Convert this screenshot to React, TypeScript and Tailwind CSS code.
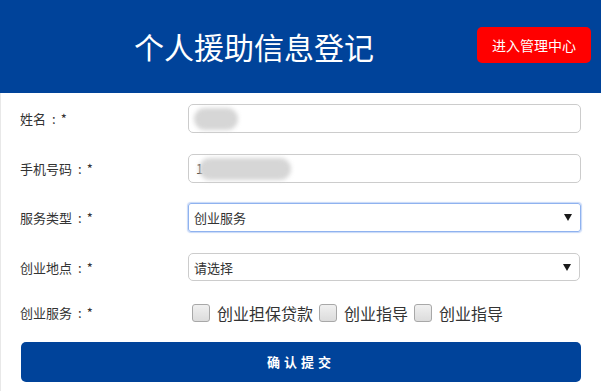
import React from "react";

const font = { fontFamily: '"Noto Sans CJK SC", "Noto Sans", sans-serif' };

function Label({ text }: { text: string }) {
  return (
    <div className="w-[187px] shrink-0 pl-[19px] text-[13px] text-[#333] leading-none flex items-center">
      <span>{text}</span>
      <span className="ml-[6px]">:</span>
      <span className="ml-[5px]">*</span>
    </div>
  );
}

function Arrow() {
  return (
    <svg width="8" height="7" viewBox="0 0 8 7" className="shrink-0">
      <polygon points="0,0 8,0 4,7" fill="#1a1a1a" />
    </svg>
  );
}

function Checkbox({ label }: { label: string }) {
  return (
    <div className="flex items-center">
      <span className="w-[18px] h-[18px] rounded-[3px] border border-[#a8a8a8] bg-gradient-to-b from-[#f0f0f0] to-[#dcdcdc]" />
      <span className="ml-[7px] mr-[6px] text-[16px] text-[#333] leading-none">{label}</span>
    </div>
  );
}

export default function App() {
  return (
    <div className="w-[601px] h-[391px] bg-white overflow-hidden" style={font}>
      <div className="h-[93px] bg-[#00439a] flex items-center">
        <div className="w-[508px] text-center text-white text-[30px] leading-none pb-[1px]">
          个人援助信息登记
        </div>
        <div className="ml-[-31px] mb-[3px] w-[114px] h-[36px] rounded-[5px] bg-[#ff0000] text-white text-[14px] flex items-center justify-center">
          进入管理中心
        </div>
      </div>
      <div className="border-l border-[#e8e8e8] h-[298px] pt-[11px]">
        <div className="flex items-center">
          <Label text="姓名" />
          <div className="w-[393px] h-[29px] rounded-[5px] border border-[#cccccc] flex items-center pl-[5px]">
            <span className="w-[44px] h-[22px] rounded-full bg-[#d6d6d6] blur-[2px]" />
          </div>
        </div>
        <div className="flex items-center mt-[21px]">
          <Label text="手机号码" />
          <div className="w-[393px] h-[29px] rounded-[5px] border border-[#cccccc] flex items-center pl-[7px] text-[13px] text-[#333]">
            <span className="leading-none">1</span>
            <span className="ml-[-4px] w-[92px] h-[22px] rounded-full bg-[#d6d6d6] blur-[2px]" />
          </div>
        </div>
        <div className="flex items-center mt-[20px]">
          <Label text="服务类型" />
          <div className="w-[393px] h-[29px] rounded-[3px] border border-[#8fb2ef] shadow-[0_0_1px_1px_rgba(143,178,239,0.5)] flex items-center justify-between pl-[5px] pr-[8px] text-[13px] text-[#333]">
            <span className="leading-none">创业服务</span>
            <Arrow />
          </div>
        </div>
        <div className="flex items-center mt-[21px]">
          <Label text="创业地点" />
          <div className="w-[392px] h-[28px] rounded-[5px] border border-[#cccccc] flex items-center justify-between pl-[5px] pr-[8px] text-[13px] text-[#333]">
            <span className="leading-none">请选择</span>
            <Arrow />
          </div>
        </div>
        <div className="flex items-center mt-[22px] h-[19px]">
          <Label text="创业服务" />
          <div className="flex items-center pl-[4px]">
            <Checkbox label="创业担保贷款" />
            <Checkbox label="创业指导" />
            <Checkbox label="创业指导" />
          </div>
        </div>
        <div className="mt-[20px] ml-[20px] w-[560px] h-[40px] rounded-[5px] bg-[#00439a] text-white text-[13px] font-bold tracking-[4px] flex items-center justify-center">
          确认提交
        </div>
      </div>
    </div>
  );
}
